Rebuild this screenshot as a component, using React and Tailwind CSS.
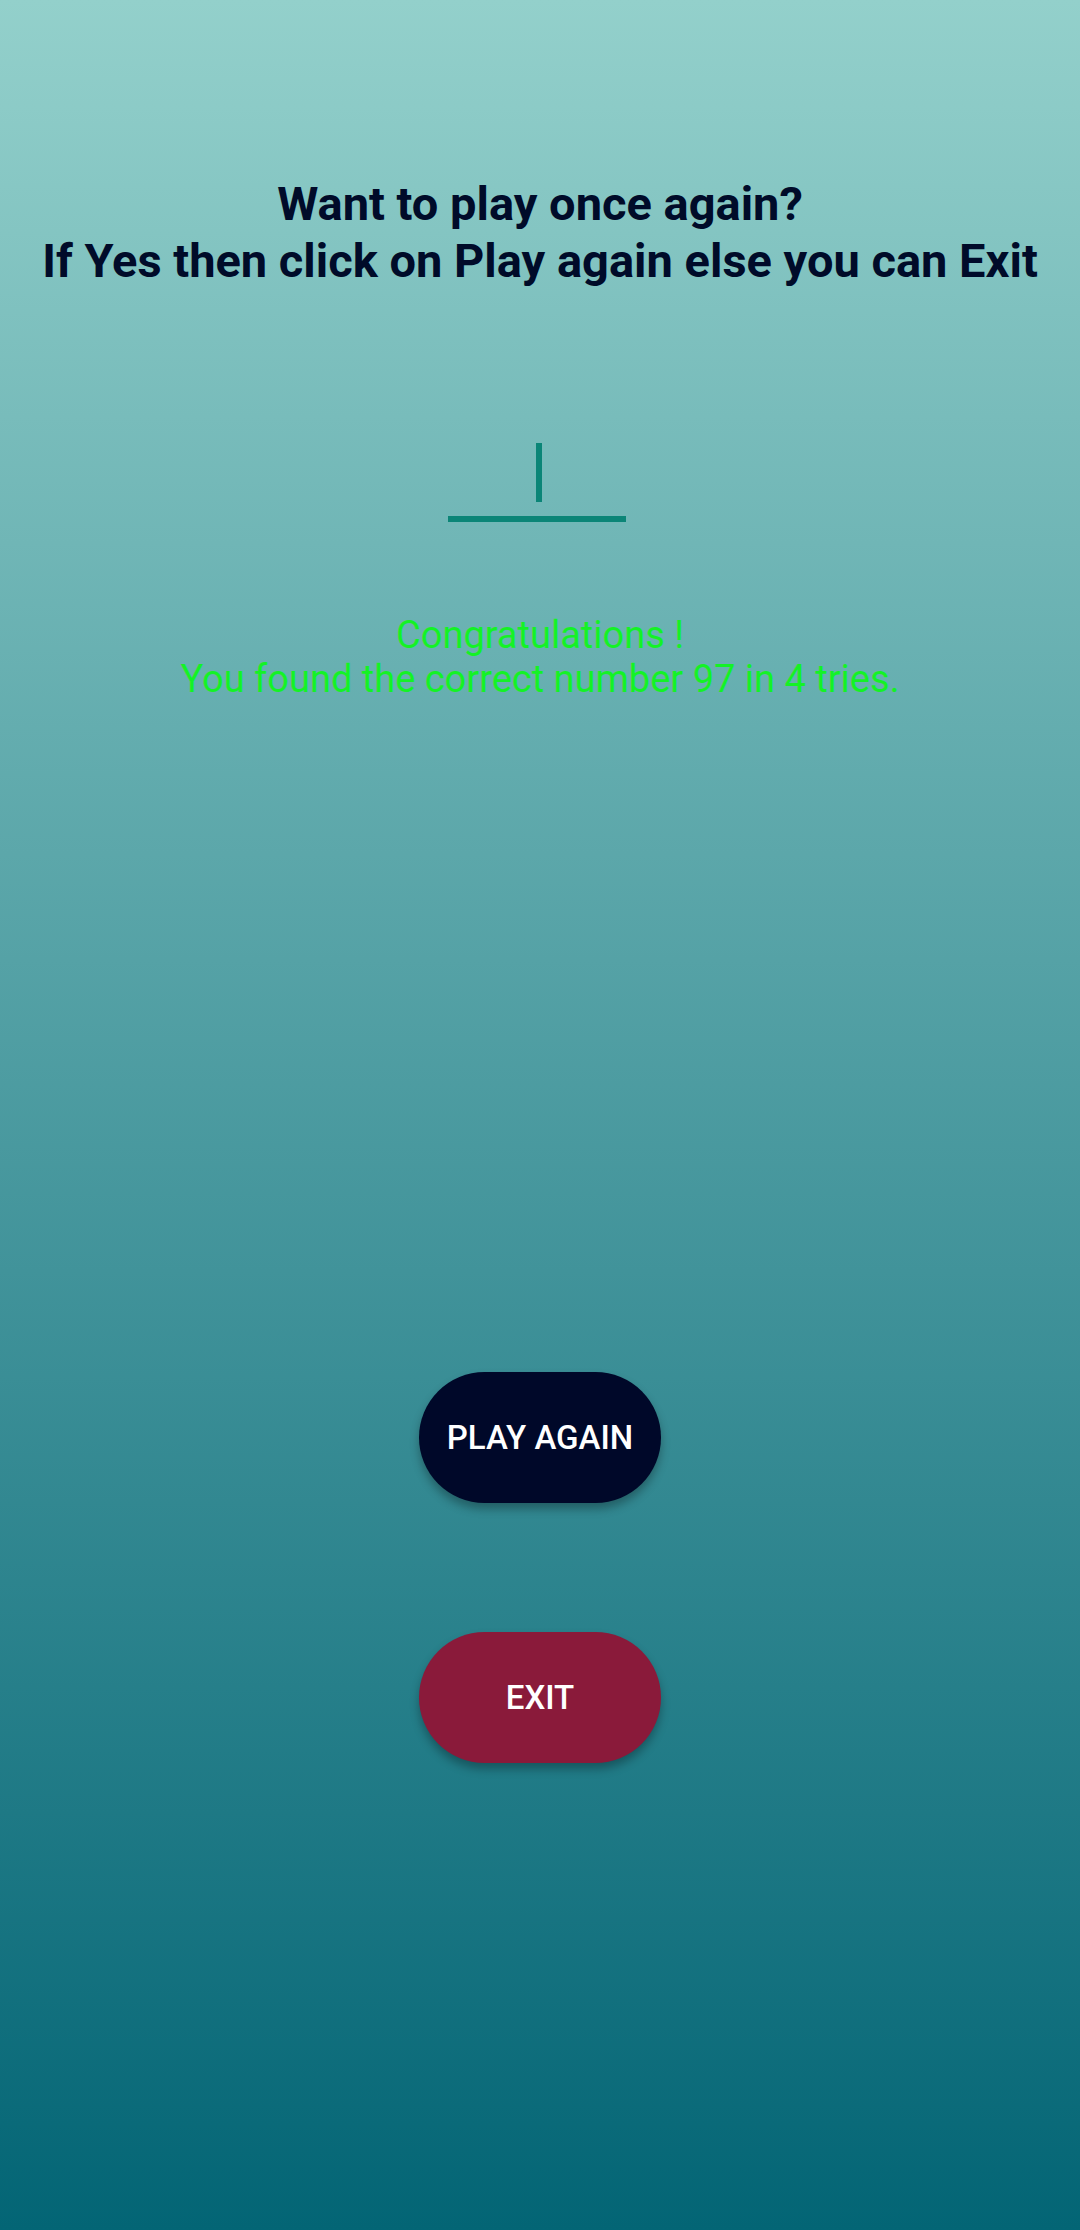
export default function App() {
  return (
    <div
      className="w-[1080px] h-[2230px] flex flex-col items-center bg-linear-to-b/srgb from-[#93d0cb] to-[#036575]"
      style={{ fontFamily: "Roboto, 'Noto Sans', sans-serif" }}
    >
      {/* Heading */}
      <div className="pt-[175px] text-center text-[#000b29] font-bold text-[47px] leading-[57px]">
        <p>Want to play once again?</p>
        <p>If Yes then click on Play again else you can Exit</p>
      </div>

      {/* Number input with caret */}
      <div className="mt-[154px] -ml-[6px] w-[178px] flex flex-col items-center">
        <div className="ml-[4px] w-[6px] h-[59px] bg-[#0b8577]" />
        <div className="mt-[14px] w-full h-[6px] bg-[#0b8577]" />
      </div>

      {/* Result */}
      <div className="mt-[91px] text-center text-[#14f226] text-[38px] leading-[44px]">
        <p>Congratulations !</p>
        <p>You found the correct number 97 in 4 tries.</p>
      </div>

      {/* Buttons */}
      <button className="mt-[671px] w-[242px] h-[131px] rounded-full bg-[#000829] text-white font-medium text-[33px] shadow-[0_6px_10px_rgba(0,0,0,0.3)]">
        PLAY AGAIN
      </button>
      <button className="mt-[129px] w-[242px] h-[131px] rounded-full bg-[#8a1a3a] text-white font-medium text-[33px] shadow-[0_6px_10px_rgba(0,0,0,0.3)]">
        EXIT
      </button>
    </div>
  )
}
